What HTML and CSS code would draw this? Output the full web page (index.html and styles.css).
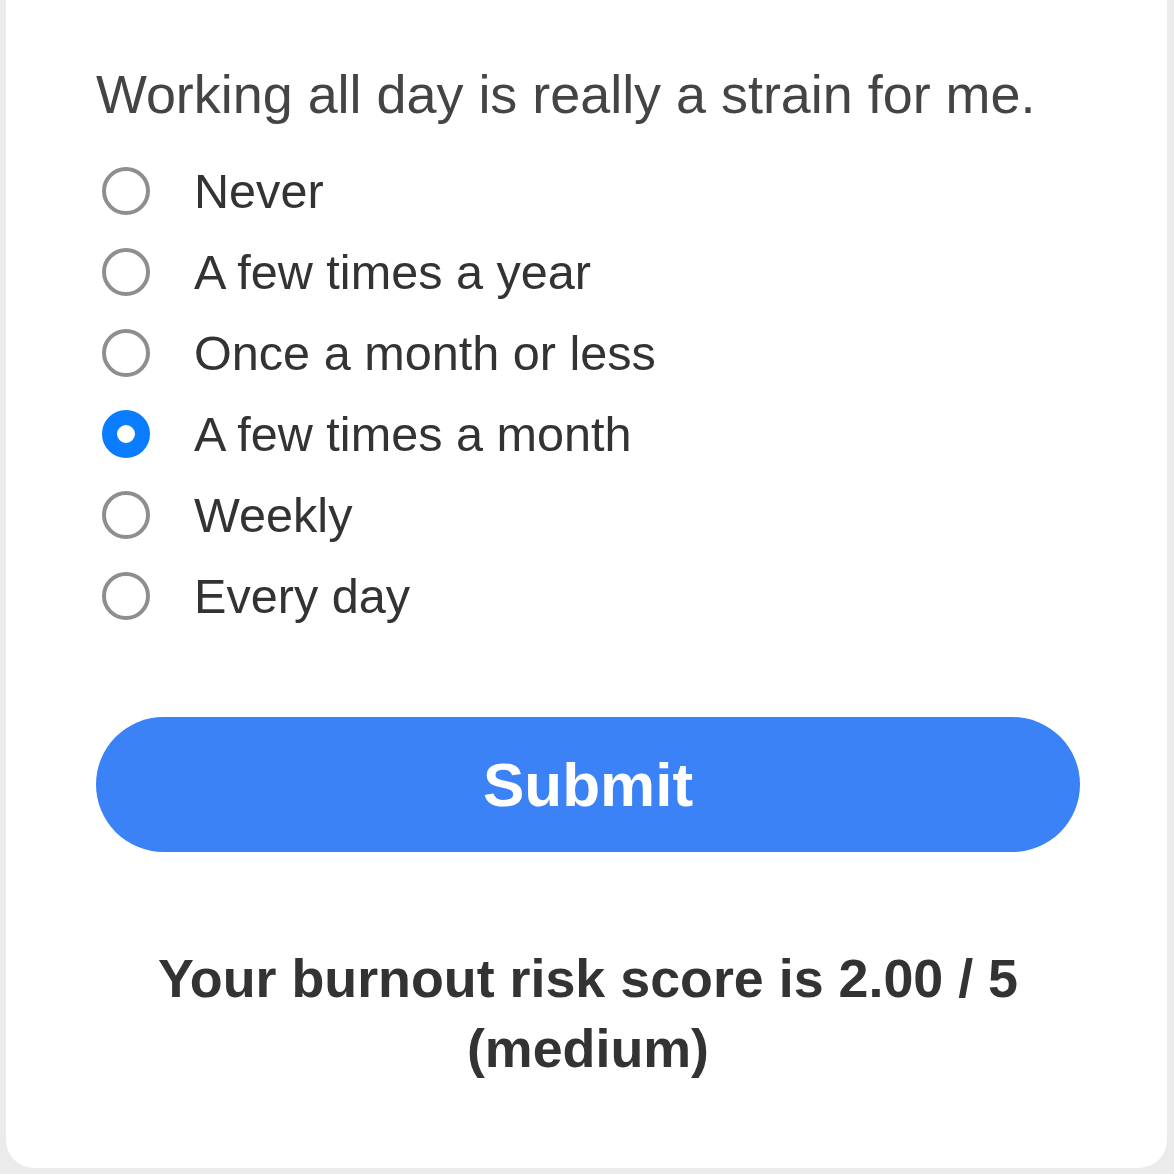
FILE: index.html
```html
<!DOCTYPE html>
<html lang="en">
<head>
    <meta charset="UTF-8">
    <meta name="viewport" content="width=device-width, initial-scale=1.0">
    <title>Burnout Check</title>
    <link rel="stylesheet" href="styles.css">
</head>
<body>
    <div class="card">
        <p class="question">Working all day is really a strain for me.</p>
        <div class="options">
            <label class="option"><input type="radio" name="q1" value="0"><span>Never</span></label>
            <label class="option"><input type="radio" name="q1" value="1"><span>A few times a year</span></label>
            <label class="option"><input type="radio" name="q1" value="2"><span>Once a month or less</span></label>
            <label class="option"><input type="radio" name="q1" value="3" checked><span>A few times a month</span></label>
            <label class="option"><input type="radio" name="q1" value="4"><span>Weekly</span></label>
            <label class="option"><input type="radio" name="q1" value="5"><span>Every day</span></label>
        </div>
        <button class="submit">Submit</button>
        <p class="result">Your burnout risk score is 2.00 / 5 (medium)</p>
    </div>
</body>
</html>
```

FILE: styles.css
```css
* {
    margin: 0;
    padding: 0;
    box-sizing: border-box;
    font-family: "Liberation Sans", Arial, sans-serif;
}

body {
    background: #ebebeb;
    color: #333;
    overflow: hidden;
}

.card {
    background: #fff;
    margin: 0 7px 0 6px;
    height: 1168px;
    border-radius: 0 0 28px 28px;
    padding: 62px 87px 0 90px;
}

.question {
    font-size: 53.9px;
    line-height: 64px;
    color: #444;
}

.options {
    margin-top: 24px;
    display: flex;
    flex-direction: column;
}

.option {
    display: flex;
    align-items: center;
    height: 81px;
    font-size: 48.6px;
    color: #333;
}

.option input {
    appearance: none;
    -webkit-appearance: none;
    width: 48px;
    height: 48px;
    margin-left: 6px;
    margin-right: 44px;
    border: 4px solid #8e8e8e;
    border-radius: 50%;
    background: #fff;
}

.option input:checked {
    border: 15px solid #0a7cff;
}

.submit {
    display: block;
    width: 100%;
    height: 135px;
    margin-top: 81px;
    border: none;
    border-radius: 68px;
    background: #3b82f6;
    color: #fff;
    font-size: 62px;
    font-weight: bold;
    cursor: pointer;
}

.result {
    margin: 91px 50px 0;
    text-align: center;
    font-size: 53.8px;
    font-weight: bold;
    line-height: 70px;
    color: #333;
}
```
